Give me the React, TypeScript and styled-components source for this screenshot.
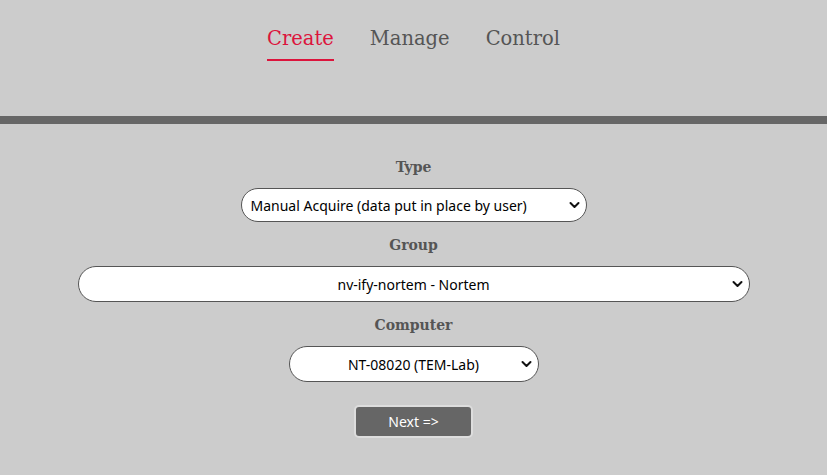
import React from "react";
import styled, { createGlobalStyle } from "styled-components";

const Global = createGlobalStyle`
  html, body { margin: 0; padding: 0; background: #cccccc; }
  body { font-family: "DejaVu Serif", serif; }
`;

const Header = styled.header`
  display: flex;
  justify-content: center;
  align-items: flex-start;
  padding-top: 26px;
  height: 90px;
  gap: 36px;
  border-bottom: 8px solid #666666;
`;

const Tab = styled.a<{ $active?: boolean }>`
  font-family: "DejaVu Serif", serif;
  font-size: 19.5px;
  color: ${(p) => (p.$active ? "#dc143c" : "#555555")};
  text-decoration: none;
  padding-bottom: 7px;
  border-bottom: 2px solid ${(p) => (p.$active ? "#dc143c" : "transparent")};
  line-height: 26px;
`;

const Form = styled.main`
  display: flex;
  flex-direction: column;
  align-items: center;
  padding-top: 33px;
`;

const Label = styled.label`
  font-family: "DejaVu Serif", serif;
  font-weight: bold;
  font-size: 14px;
  color: #555555;
  line-height: 20px;
  margin-bottom: 11px;
`;

const Field = styled.div<{ $width: number }>`
  position: relative;
  width: ${(p) => p.$width}px;
  margin-bottom: 13px;
`;

const Select = styled.select<{ $left?: boolean; $height: number }>`
  appearance: none;
  -webkit-appearance: none;
  display: block;
  width: 100%;
  box-sizing: border-box;
  font-family: "Noto Sans", sans-serif;
  font-size: 14px;
  color: #000;
  background: #ffffff;
  border: 1px solid #555555;
  border-radius: 18px;
  height: ${(p) => p.$height}px;
  padding: ${(p) => (p.$left ? "0 40px 0 9px" : "0 10px")};
  text-align: ${(p) => (p.$left ? "left" : "center")};
  text-align-last: ${(p) => (p.$left ? "left" : "center")};
  outline: none;
`;

const Chevron = styled.svg`
  position: absolute;
  right: 7px;
  top: 50%;
  width: 11px;
  height: 8px;
  margin-top: -4px;
  pointer-events: none;
`;

const Button = styled.button`
  margin-top: 10px;
  width: 119px;
  height: 33px;
  background: #666666;
  color: #ffffff;
  border: 2px solid #dddddd;
  border-radius: 5px;
  font-family: "Noto Sans", sans-serif;
  font-size: 14px;
`;

function Dropdown({
  width,
  height,
  left,
  value,
}: {
  width: number;
  height: number;
  left?: boolean;
  value: string;
}) {
  return (
    <Field $width={width}>
      <Select $left={left} $height={height} defaultValue="v">
        <option value="v">{value}</option>
      </Select>
      <Chevron viewBox="0 0 11 8">
        <path d="M1.5 2 L5.5 6 L9.5 2" fill="none" stroke="#111" strokeWidth="2" strokeLinecap="round" strokeLinejoin="round" />
      </Chevron>
    </Field>
  );
}

export default function App() {
  return (
    <>
      <Global />
      <Header>
        <Tab $active>Create</Tab>
        <Tab>Manage</Tab>
        <Tab>Control</Tab>
      </Header>
      <Form>
        <Label>Type</Label>
        <Dropdown width={346} height={34} left value="Manual Acquire (data put in place by user)" />
        <Label>Group</Label>
        <Dropdown width={672} height={36} value="nv-ify-nortem - Nortem" />
        <Label>Computer</Label>
        <Dropdown width={250} height={36} value="NT-08020 (TEM-Lab)" />
        <Button>Next =&gt;</Button>
      </Form>
    </>
  );
}
